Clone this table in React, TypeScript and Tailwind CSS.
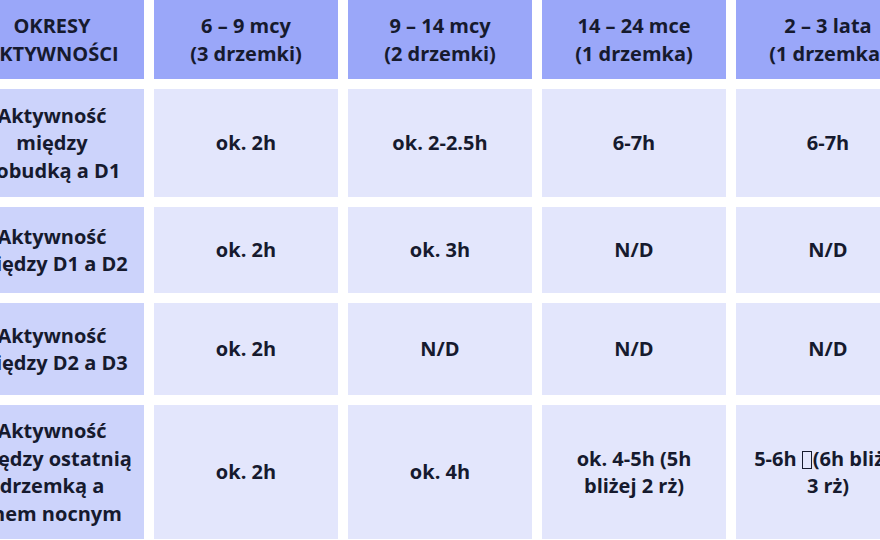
const header = [
  ["OKRESY", "AKTYWNOŚCI"],
  ["6 – 9 mcy", "(3 drzemki)"],
  ["9 – 14 mcy", "(2 drzemki)"],
  ["14 – 24 mce", "(1 drzemka)"],
  ["2 – 3 lata", "(1 drzemka)"],
];

type Row = { label: string[]; cells: React.ReactNode[][] };

const Tofu = () => (
  <span className="inline-block w-[10px] h-[18px] border-[1.5px] border-[#161a2e] align-[-3px] mr-[1px]" />
);

const rows: Row[] = [
  {
    label: ["Aktywność", "między", "pobudką a D1"],
    cells: [["ok. 2h"], ["ok. 2-2.5h"], ["6-7h"], ["6-7h"]],
  },
  {
    label: ["Aktywność", "między D1 a D2"],
    cells: [["ok. 2h"], ["ok. 3h"], ["N/D"], ["N/D"]],
  },
  {
    label: ["Aktywność", "między D2 a D3"],
    cells: [["ok. 2h"], ["N/D"], ["N/D"], ["N/D"]],
  },
  {
    label: ["Aktywność", "między ostatnią", "drzemką a", "snem nocnym"],
    cells: [
      ["ok. 2h"],
      ["ok. 4h"],
      ["ok. 4-5h (5h", "bliżej 2 rż)"],
      [
        <>
          5-6h <Tofu />(6h bliżej
        </>,
        "3 rż)",
      ],
    ],
  },
];

const Lines = ({ lines }: { lines: React.ReactNode[] }) => (
  <div className="text-center">
    {lines.map((l, i) => (
      <div key={i} className="whitespace-nowrap">
        {l}
      </div>
    ))}
  </div>
);

export default function App() {
  return (
    <div className="w-[880px] h-[540px] overflow-hidden bg-white">
      <div
        className="-ml-[40px] grid grid-cols-[repeat(5,184px)] grid-rows-[79px_108px_86px_92px_134px] gap-x-[10px] gap-y-[10px] text-[20px] leading-[27.5px] font-bold text-[#161a2e]"
        style={{ fontFamily: '"Open Sans", "Noto Sans", sans-serif' }}
      >
        {header.map((h, i) => (
          <div key={i} className="bg-[#9aa7f9] flex items-center justify-center px-3">
            <Lines lines={h} />
          </div>
        ))}
        {rows.map((r, ri) => (
          <div key={ri} className="contents">
            <div className="bg-[#ccd3fb] flex items-center justify-center px-3">
              <Lines lines={r.label} />
            </div>
            {r.cells.map((c, ci) => (
              <div key={ci} className="bg-[#e3e6fc] flex items-center justify-center px-3">
                <Lines lines={c} />
              </div>
            ))}
          </div>
        ))}
      </div>
    </div>
  );
}
